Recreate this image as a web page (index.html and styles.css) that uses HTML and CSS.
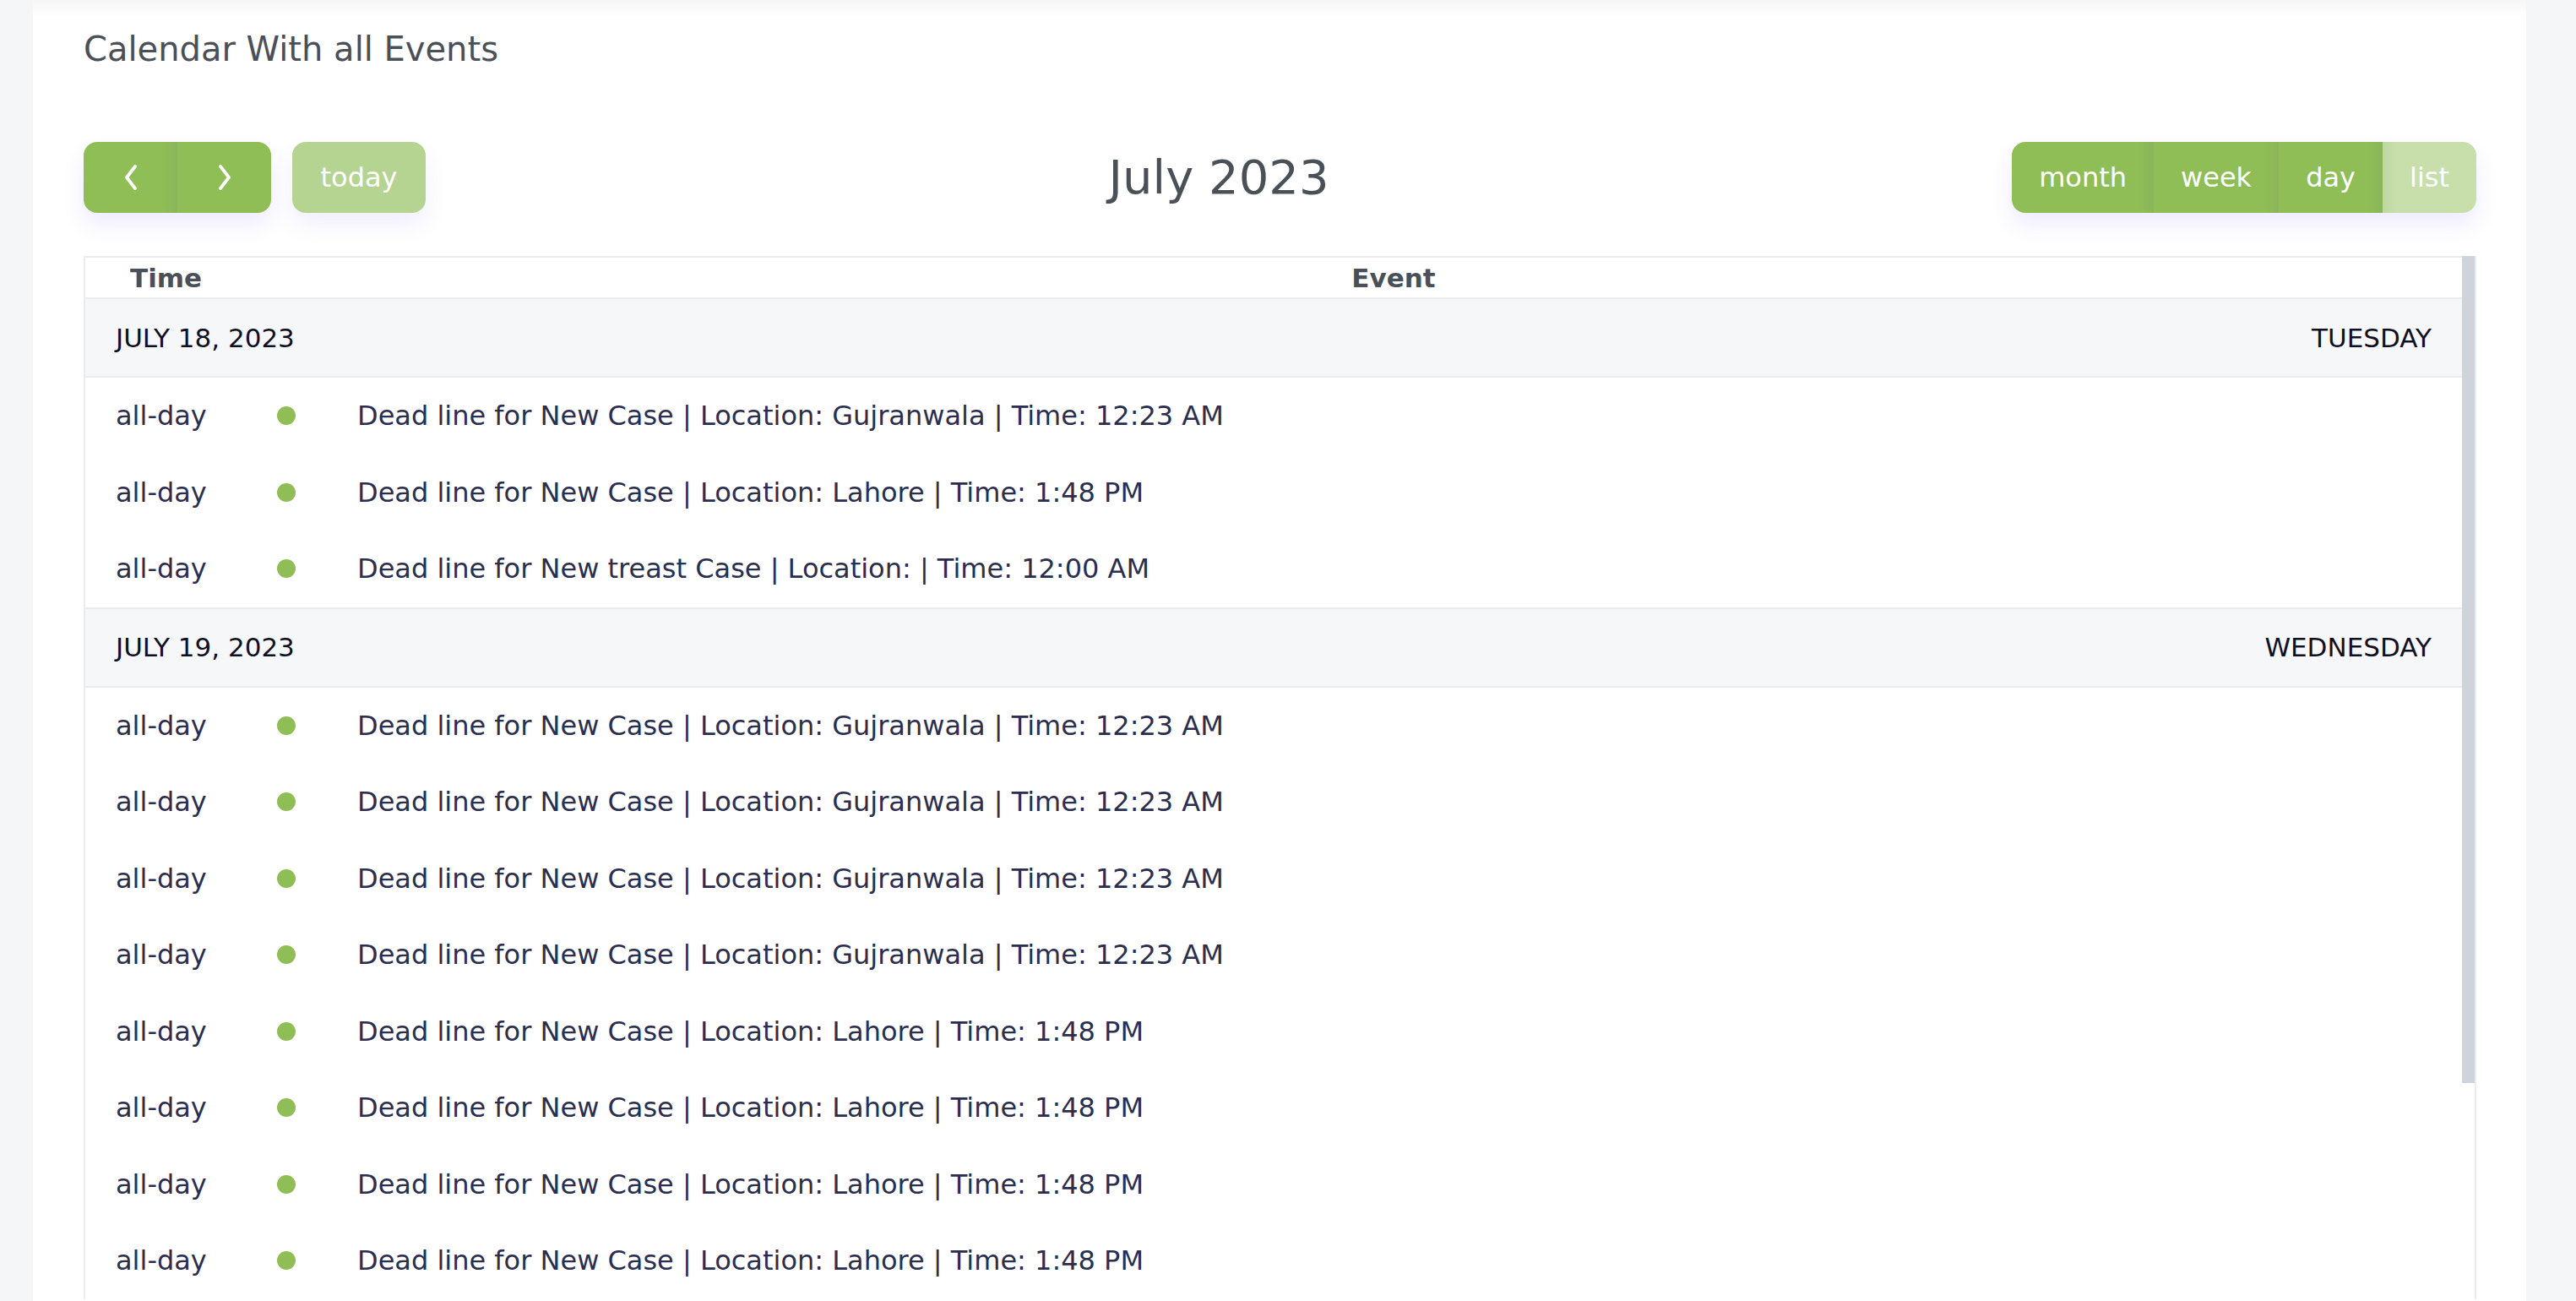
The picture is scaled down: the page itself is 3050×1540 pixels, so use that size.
FILE: index.html
```html
<!DOCTYPE html>
<html lang="en">
<head>
<meta charset="utf-8">
<title>Calendar With all Events</title>
<link rel="stylesheet" href="styles.css">
</head>
<body>
<div class="card">
  <h4 class="card-title">Calendar With all Events</h4>
  <div class="calendar">
    <div class="toolbar">
      <div class="chunk">
        <div class="btn-group">
          <button class="btn btn-icon sep"><svg width="20" height="32" viewBox="0 0 20 32"><path d="M15 3 L5 16 L15 29" fill="none" stroke="#fff" stroke-width="3.8" stroke-linecap="round" stroke-linejoin="round"/></svg></button>
          <button class="btn btn-icon"><svg width="20" height="32" viewBox="0 0 20 32"><path d="M5 3 L15 16 L5 29" fill="none" stroke="#fff" stroke-width="3.8" stroke-linecap="round" stroke-linejoin="round"/></svg></button>
        </div>
        <button class="btn btn-today">today</button>
      </div>
      <h2 class="toolbar-title">July 2023</h2>
      <div class="btn-group">
        <button class="btn sep">month</button>
        <button class="btn sep">week</button>
        <button class="btn sep">day</button>
        <button class="btn btn-active">list</button>
      </div>
    </div>
    <div class="list-view">
      <div class="list-table">
        <div class="list-head">
          <div class="th th-time">Time</div>
          <div class="th th-event">Event</div>
        </div>
        <div class="day-head"><span>JULY 18, 2023</span><span>TUESDAY</span></div>
        <div class="ev-row"><span class="ev-time">all-day</span><span class="ev-dot"></span><span class="ev-title">Dead line for New Case | Location: Gujranwala | Time: 12:23 AM</span></div>
        <div class="ev-row"><span class="ev-time">all-day</span><span class="ev-dot"></span><span class="ev-title">Dead line for New Case | Location: Lahore | Time: 1:48 PM</span></div>
        <div class="ev-row"><span class="ev-time">all-day</span><span class="ev-dot"></span><span class="ev-title">Dead line for New treast Case | Location: | Time: 12:00 AM</span></div>
        <div class="day-head"><span>JULY 19, 2023</span><span>WEDNESDAY</span></div>
        <div class="ev-row"><span class="ev-time">all-day</span><span class="ev-dot"></span><span class="ev-title">Dead line for New Case | Location: Gujranwala | Time: 12:23 AM</span></div>
        <div class="ev-row"><span class="ev-time">all-day</span><span class="ev-dot"></span><span class="ev-title">Dead line for New Case | Location: Gujranwala | Time: 12:23 AM</span></div>
        <div class="ev-row"><span class="ev-time">all-day</span><span class="ev-dot"></span><span class="ev-title">Dead line for New Case | Location: Gujranwala | Time: 12:23 AM</span></div>
        <div class="ev-row"><span class="ev-time">all-day</span><span class="ev-dot"></span><span class="ev-title">Dead line for New Case | Location: Gujranwala | Time: 12:23 AM</span></div>
        <div class="ev-row"><span class="ev-time">all-day</span><span class="ev-dot"></span><span class="ev-title">Dead line for New Case | Location: Lahore | Time: 1:48 PM</span></div>
        <div class="ev-row"><span class="ev-time">all-day</span><span class="ev-dot"></span><span class="ev-title">Dead line for New Case | Location: Lahore | Time: 1:48 PM</span></div>
        <div class="ev-row"><span class="ev-time">all-day</span><span class="ev-dot"></span><span class="ev-title">Dead line for New Case | Location: Lahore | Time: 1:48 PM</span></div>
        <div class="ev-row"><span class="ev-time">all-day</span><span class="ev-dot"></span><span class="ev-title">Dead line for New Case | Location: Lahore | Time: 1:48 PM</span></div>
      </div>
      <div class="scrollbar"><div class="thumb"></div></div>
    </div>
  </div>
</div>
</body>
</html>
```
FILE: styles.css
```css
html, body {
  margin: 0;
  padding: 0;
  overflow: hidden;
  background: #f5f6f8;
}
body {
  font-family: "DejaVu Sans", "Noto Sans", sans-serif;
  height: 1540px;
}
.card {
  margin: 0 59px 0 39px;
  padding: 34px 59px 0 60px;
  background: linear-gradient(to bottom, #f6f6f7 0, #ffffff 20px);
  height: 1540px;
  box-sizing: border-box;
  overflow: hidden;
}
.card-title {
  margin: 0;
  font-size: 40px;
  font-weight: 400;
  line-height: 48px;
  color: #4a5058;
}
.toolbar {
  margin-top: 86px;
  display: flex;
  justify-content: space-between;
  align-items: center;
}
.chunk {
  display: flex;
  align-items: center;
  gap: 25px;
}
.toolbar-title {
  margin: 0;
  font-size: 56px;
  font-weight: 400;
  line-height: 84px;
  color: #4a5058;
}
.btn-group {
  display: flex;
  border-radius: 16px;
  box-shadow: 0 14px 26px rgba(118, 98, 255, 0.12);
}
.btn {
  font-family: "DejaVu Sans", "Noto Sans", sans-serif;
  font-size: 32px;
  line-height: 48px;
  height: 84px;
  padding: 18px 32px;
  border: none;
  margin: 0;
  color: #ffffff;
  background: #8fbe56;
  box-sizing: border-box;
}
.btn-group .btn:first-child {
  border-radius: 16px 0 0 16px;
}
.btn-group .btn:last-child {
  border-radius: 0 16px 16px 0;
}
.btn.sep {
  background: linear-gradient(to right, #8fbe56 calc(100% - 18px), #8ab55b);
}
.btn-icon {
  width: 111px;
  padding: 0;
  display: flex;
  align-items: center;
  justify-content: center;
}
.btn-today {
  width: 158px;
  padding: 18px 0;
  background: #b6d491;
  border-radius: 16px;
  box-shadow: 0 14px 26px rgba(118, 98, 255, 0.10);
}
.btn-active {
  background: linear-gradient(to right, #bfd8a2, #c8deab 18px);
}
.list-view {
  margin-top: 51px;
  display: flex;
  border: 2px solid #e9edf2;
  border-bottom: none;
}
.list-table {
  flex: 1;
}
.scrollbar {
  width: 15px;
  margin-top: -2px;
}
.thumb {
  height: 979px;
  background: #cfd3db;
}
.list-head {
  height: 47px;
  display: grid;
  grid-template-columns: 284px 1fr;
  align-items: center;
}
.th {
  font-size: 31px;
  font-weight: 700;
  color: #4a5058;
}
.th-time {
  padding-left: 53px;
}
.th-event {
  text-align: center;
}
.day-head {
  height: 91px;
  background: #f6f7f9;
  border-top: 2px solid #e9edf2;
  border-bottom: 2px solid #e9edf2;
  display: flex;
  justify-content: space-between;
  align-items: center;
  padding: 0 36px;
  font-size: 31px;
  color: #0f1024;
}
.ev-row {
  height: 90.5px;
  display: grid;
  grid-template-columns: 227px 95px 1fr;
  align-items: center;
  font-size: 32px;
  color: #2a2e4f;
}
.ev-time {
  padding-left: 36px;
}
.ev-dot {
  width: 22px;
  height: 22px;
  border-radius: 50%;
  background: #8fbe56;
}
.ev-title {
  white-space: nowrap;
}
```
